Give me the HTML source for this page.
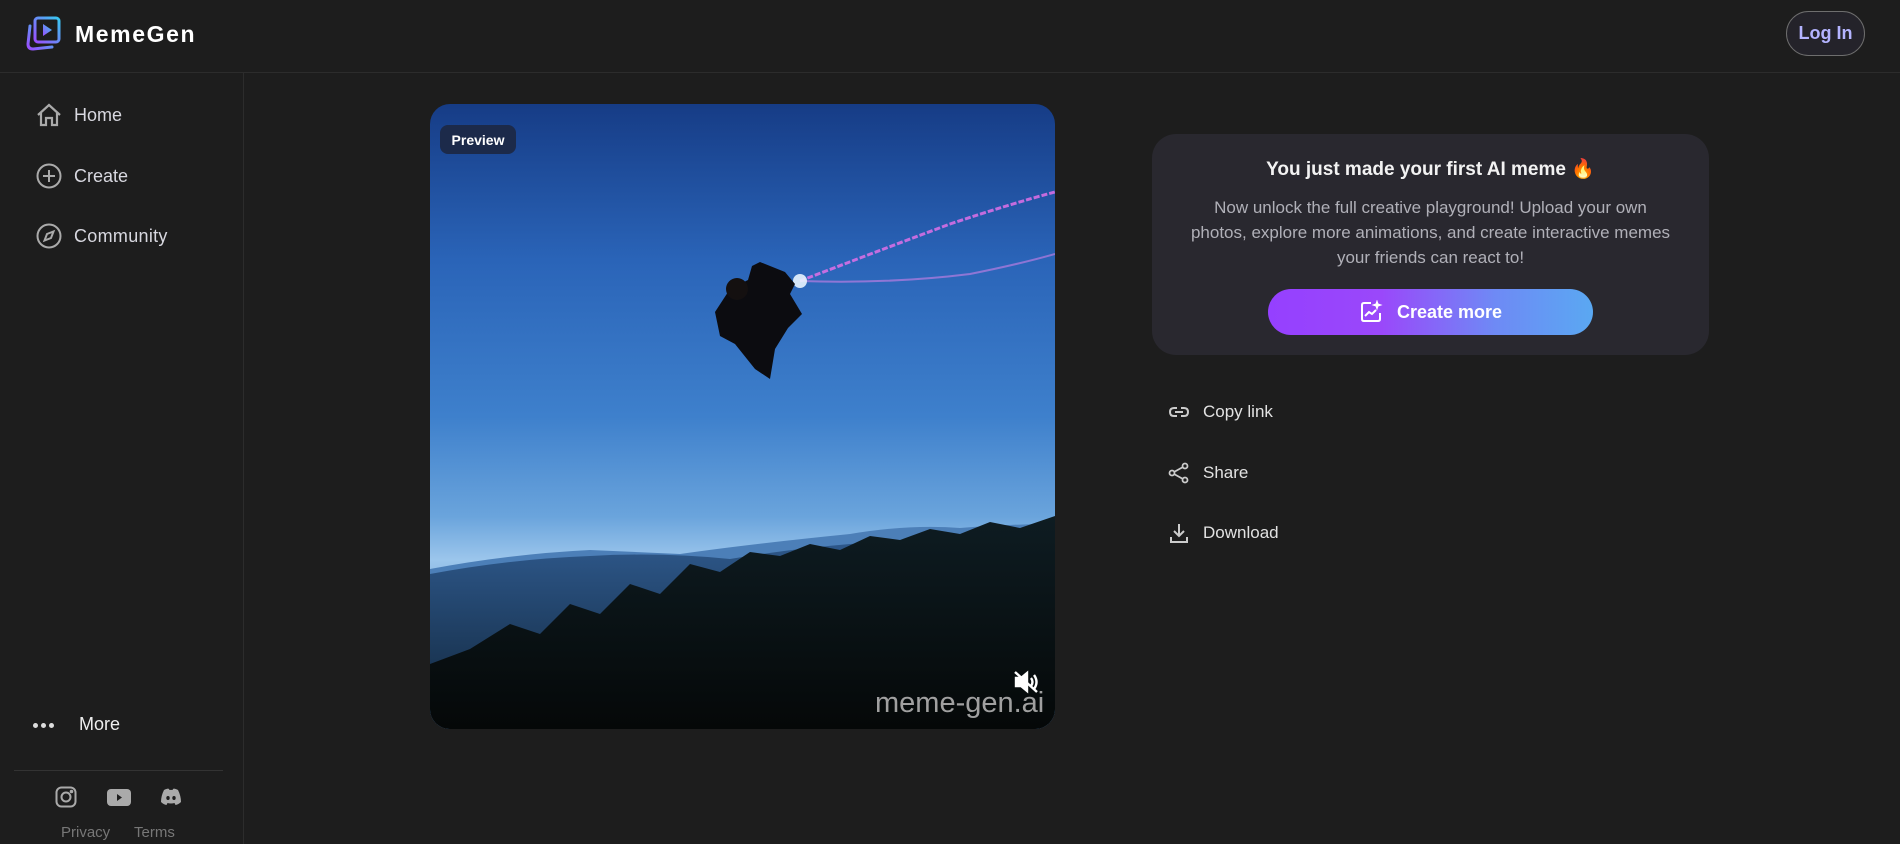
<!DOCTYPE html>
<html><head><meta charset="utf-8"><style>
*{box-sizing:border-box;margin:0;padding:0}
body{width:1900px;height:844px;background:#1d1d1d;font-family:"Liberation Sans",sans-serif;color:#ddd;position:relative;overflow:hidden}
.abs{position:absolute}
.hdr{left:0;top:0;width:1900px;height:73px;border-bottom:1px solid #2c2c2c}
.side{left:243px;top:73px;width:1px;height:771px;background:#2c2c2c}
.nav{left:36px;display:flex;align-items:center;font-size:18px;color:#d8d8e0}
.nav svg{margin-right:12px}
.act{display:flex;align-items:center;font-size:17px;color:#e2e2e2;left:1168px}
.act svg{margin-right:13px}
</style></head><body>
<div class="abs hdr"></div>
<div class="abs side"></div>
<!-- logo -->
<svg class="abs" style="left:26px;top:16px" width="36" height="36" viewBox="0 0 36 36">
<defs><linearGradient id="lg" x1="1" y1="0" x2="0" y2="1"><stop offset="0" stop-color="#38c8f0"/><stop offset="1" stop-color="#9b4dff"/></linearGradient></defs>
<path d="M4 10 L2 28 Q2 33 7 33 L26 31" stroke="url(#lg)" stroke-width="3" fill="none" stroke-linecap="round"/>
<rect x="9" y="2" width="24" height="24" rx="3" stroke="url(#lg)" stroke-width="3" fill="none"/>
<path d="M17 8 L26 14 L17 20 Z" fill="url(#lg)"/>
</svg>
<div class="abs" style="left:75px;top:21px;font-size:23px;font-weight:bold;color:#fff;letter-spacing:1.6px">MemeGen</div>
<div class="abs" style="left:1786px;top:11px;width:79px;height:45px;border:1px solid #6e6e6e;border-radius:23px;background:#24232a;color:#b4b4ff;font-size:18px;font-weight:bold;display:flex;align-items:center;justify-content:center">Log In</div>

<div class="abs nav" style="top:103px"><svg width="26" height="24" viewBox="0 0 26 24" fill="none" stroke="#aaa" stroke-width="2.2"><path d="M2 12 L13 2 L24 12 M5 10 V22 H10 V15 H16 V22 H21 V10"/></svg>Home</div>
<div class="abs nav" style="top:163px"><svg width="26" height="26" viewBox="0 0 26 26" fill="none" stroke="#aaa" stroke-width="2"><circle cx="13" cy="13" r="11.5"/><path d="M13 7V19M7 13H19"/></svg>Create</div>
<div class="abs nav" style="top:223px"><svg width="26" height="26" viewBox="0 0 26 26" fill="none" stroke="#aaa" stroke-width="2"><circle cx="13" cy="13" r="11.5"/><path d="M17.5 8.5 L15 15 L8.5 17.5 L11 11 Z"/></svg><span style="letter-spacing:0.3px">Community</span></div>

<div class="abs" style="left:33px;top:723px;display:flex;gap:3px"><i style="width:5px;height:5px;border-radius:50%;background:#ddd"></i><i style="width:5px;height:5px;border-radius:50%;background:#ddd"></i><i style="width:5px;height:5px;border-radius:50%;background:#ddd"></i></div>
<div class="abs" style="left:79px;top:714px;font-size:18px;color:#eee">More</div>
<div class="abs" style="left:14px;top:770px;width:209px;height:1px;background:#333"></div>
<svg class="abs" style="left:55px;top:786px" width="22" height="22" viewBox="0 0 22 22" fill="none" stroke="#aaa" stroke-width="2"><rect x="1.5" y="1.5" width="19" height="19" rx="5"/><circle cx="11" cy="11" r="4.5"/><circle cx="16.5" cy="5.5" r="0.8" fill="#aaa"/></svg>
<svg class="abs" style="left:107px;top:789px" width="24" height="17" viewBox="0 0 24 17"><rect width="24" height="17" rx="4" fill="#aaa"/><path d="M10 5 L15 8.5 L10 12Z" fill="#1d1d1d"/></svg>
<svg class="abs" style="left:160px;top:788px" width="22" height="18" viewBox="0 0 22 18"><path d="M4 2 Q8 0 9 1 L9.5 2 Q11 1.7 12.5 2 L13 1 Q14 0 18 2 Q21 8 21 14 Q18.5 16.5 15.5 17 L14.5 15 Q11 16 7.5 15 L6.5 17 Q3.5 16.5 1 14 Q1 8 4 2Z" fill="#aaa"/><ellipse cx="8" cy="10" rx="1.7" ry="2" fill="#1d1d1d"/><ellipse cx="14" cy="10" rx="1.7" ry="2" fill="#1d1d1d"/></svg>
<div class="abs" style="left:61px;top:824px;font-size:15px;color:#777">Privacy</div>
<div class="abs" style="left:134px;top:824px;font-size:15px;color:#777">Terms</div>

<!-- video -->
<div class="abs" style="left:430px;top:104px;width:625px;height:625px;border-radius:20px;overflow:hidden;background:linear-gradient(180deg,#163c86 0%,#2a64b8 25%,#3e80cc 50%,#6aa4dc 66%,#9cc6ec 73%,#7aa8d8 80%)">
<svg width="625" height="625" viewBox="0 0 625 625" style="position:absolute;left:0;top:0">
<defs><linearGradient id="for" x1="0" y1="0" x2="0" y2="1"><stop offset="0" stop-color="#0e1c22"/><stop offset="1" stop-color="#050808"/></linearGradient>
<linearGradient id="mt" x1="0" y1="0" x2="0" y2="1"><stop offset="0" stop-color="#2f5a8e"/><stop offset="1" stop-color="#102438"/></linearGradient></defs>
<path d="M0 465 Q80 450 160 446 L250 450 Q320 440 420 430 Q480 420 530 424 Q580 420 625 420 V625 H0Z" fill="#4c7fb8"/>
<path d="M0 470 Q80 455 160 452 Q230 448 300 455 Q360 445 420 440 L625 430 V625 H0Z" fill="url(#mt)"/>
<path d="M0 560 L40 545 L80 520 L110 530 L140 500 L170 510 L200 480 L230 490 L260 460 L290 468 L320 448 L350 452 L380 440 L410 446 L440 432 L470 436 L500 425 L530 430 L560 418 L590 424 L625 412 V625 H0Z" fill="url(#for)"/>
<path d="M370 177 Q440 150 520 120 Q580 100 625 88" stroke="#e070e8" stroke-width="3" fill="none" opacity="0.85" stroke-dasharray="6 2"/>
<path d="M370 177 Q460 180 540 170 Q590 160 625 150" stroke="#d080e8" stroke-width="2" fill="none" opacity="0.6"/>
<circle cx="370" cy="177" r="7" fill="#e8f4ff" opacity="0.9"/>
<path d="M330 158 L355 168 L365 180 L360 190 L372 210 L358 224 L345 245 L340 275 L325 265 L305 240 L290 232 L285 208 L300 185 L318 176 L322 162Z" fill="#0c0c10"/>
<circle cx="307" cy="185" r="11" fill="#141010"/>
</svg>
<svg class="abs" style="left:583px;top:566px" width="26" height="24" viewBox="0 0 26 24" fill="none" stroke="#fff" stroke-width="2.4"><path d="M3 8 H8 L14 3 V21 L8 16 H3Z" fill="#fff"/><path d="M18 8 Q21 12 18 16 M21 5 Q26 12 21 19"/><path d="M2 2 L24 22"/></svg>
<div class="abs" style="left:445px;top:583px;font-size:29px;color:#a0a0a0">meme-gen.ai</div>
<div class="abs" style="left:10px;top:21px;width:76px;height:29px;border-radius:8px;background:#1c2a4a;color:#fff;font-size:14px;font-weight:bold;display:flex;align-items:center;justify-content:center">Preview</div>
</div>

<!-- card -->
<div class="abs" style="left:1152px;top:134px;width:557px;height:221px;border-radius:24px;background:#29282f;text-align:center">
<div style="margin-top:23px;font-size:19px;font-weight:bold;color:#f2f2f2">You just made your first AI meme 🔥</div>
<div style="margin:14px auto 0;width:557px;font-size:17px;line-height:25px;color:#b0b0b8;white-space:nowrap">Now unlock the full creative playground! Upload your own<br>photos, explore more animations, and create interactive memes<br>your friends can react to!</div>
</div>
<div class="abs" style="left:1268px;top:289px;width:325px;height:46px;border-radius:23px;background:linear-gradient(90deg,#9540ff 0%,#9a48fa 35%,#6e8af5 70%,#5aa8f2 100%);display:flex;align-items:center;justify-content:center;color:#fff;font-size:18px;font-weight:bold">
<svg width="24" height="24" viewBox="0 0 24 24" fill="none" stroke="#fff" stroke-width="2" style="margin-right:14px"><path d="M12 3 H5 Q3 3 3 5 V19 Q3 21 5 21 H19 Q21 21 21 19 V13"/><path d="M6 16 L10 12 L13 14 L17 10"/><path d="M18 1 L19 4 L22 5 L19 6 L18 9 L17 6 L14 5 L17 4Z" fill="#fff" stroke-width="1"/></svg>Create more</div>

<div class="abs act" style="top:401px"><svg width="22" height="22" viewBox="0 0 22 22" fill="none" stroke="#ccc" stroke-width="2"><path d="M9 7 H6 Q2 7 2 11 Q2 15 6 15 H9 M13 7 H16 Q20 7 20 11 Q20 15 16 15 H13 M7 11 H15"/></svg>Copy link</div>
<div class="abs act" style="top:462px"><svg width="22" height="22" viewBox="0 0 22 22" fill="none" stroke="#ccc" stroke-width="1.8"><circle cx="17" cy="4" r="2.5"/><circle cx="4" cy="11" r="2.5"/><circle cx="17" cy="18" r="2.5"/><path d="M6 10 L15 5 M6 12 L15 17"/></svg>Share</div>
<div class="abs act" style="top:522px"><svg width="22" height="22" viewBox="0 0 22 22" fill="none" stroke="#ccc" stroke-width="2"><path d="M11 2 V14 M6 9 L11 14 L16 9 M3 15 V20 H19 V15"/></svg>Download</div>
</body></html>
